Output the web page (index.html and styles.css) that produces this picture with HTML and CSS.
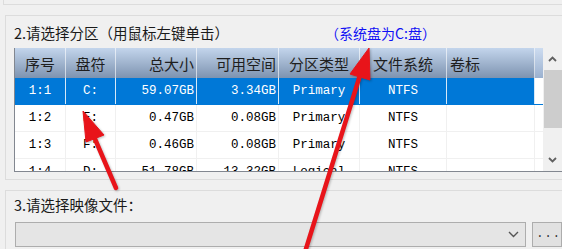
FILE: index.html
```html
<!DOCTYPE html>
<html lang="zh-CN">
<head>
<meta charset="utf-8">
<title>分区选择</title>
<link rel="stylesheet" href="styles.css">
</head>
<body>
<div class="window">
  <div class="prev-box"></div>

  <section class="group group-part">
    <div class="group-head">
      <span class="label">2.请选择分区（用鼠标左键单击）</span>
      <span class="note">（系统盘为C:盘）</span>
    </div>
    <div class="list">
      <div class="list-main">
        <div class="row head">
          <div class="c center">序号</div>
          <div class="c center">盘符</div>
          <div class="c right">总大小</div>
          <div class="c right">可用空间</div>
          <div class="c center">分区类型</div>
          <div class="c center">文件系统</div>
          <div class="c left">卷标</div>
          <div class="fill"></div>
        </div>
        <div class="row body sel">
          <div class="c center">1:1</div>
          <div class="c center">C:</div>
          <div class="c right">59.07GB</div>
          <div class="c right">3.34GB</div>
          <div class="c center">Primary</div>
          <div class="c center">NTFS</div>
          <div class="c left"></div>
          <div class="fill"></div>
        </div>
        <div class="row body">
          <div class="c center">1:2</div>
          <div class="c center">E:</div>
          <div class="c right">0.47GB</div>
          <div class="c right">0.08GB</div>
          <div class="c center">Primary</div>
          <div class="c center">NTFS</div>
          <div class="c left"></div>
          <div class="fill"></div>
        </div>
        <div class="row body">
          <div class="c center">1:3</div>
          <div class="c center">F:</div>
          <div class="c right">0.46GB</div>
          <div class="c right">0.08GB</div>
          <div class="c center">Primary</div>
          <div class="c center">NTFS</div>
          <div class="c left"></div>
          <div class="fill"></div>
        </div>
        <div class="row body">
          <div class="c center">1:4</div>
          <div class="c center">D:</div>
          <div class="c right">51.78GB</div>
          <div class="c right">13.32GB</div>
          <div class="c center">Logical</div>
          <div class="c center">NTFS</div>
          <div class="c left"></div>
          <div class="fill"></div>
        </div>
      </div>
      <div class="vscroll">
        <div class="sbtn">
          <svg width="9" height="6" viewBox="0 0 9 6"><path d="M1 5 L4.5 1.5 L8 5" fill="none" stroke="#606060" stroke-width="1.8"/></svg>
        </div>
        <div class="thumb"></div>
        <div class="track"></div>
        <div class="sbtn">
          <svg width="9" height="6" viewBox="0 0 9 6"><path d="M1 1 L4.5 4.5 L8 1" fill="none" stroke="#606060" stroke-width="1.8"/></svg>
        </div>
      </div>
    </div>
  </section>

  <section class="group group-image">
    <div class="label">3.请选择映像文件：</div>
    <div class="picker">
      <div class="combo">
        <svg width="11" height="7" viewBox="0 0 11 7"><path d="M1 1 L5.5 5.5 L10 1" fill="none" stroke="#555" stroke-width="1.4"/></svg>
      </div>
      <div class="browse">...</div>
    </div>
  </section>

  <svg class="arrows" width="562" height="249" viewBox="0 0 562 249">
    <g fill="#e8141a" stroke="#e8141a">
      <line x1="116" y1="188" x2="92" y2="132" stroke-width="4.5" stroke-linecap="round"/>
      <polygon points="83,111 104,135 86,142" stroke-width="1" stroke-linejoin="round"/>
      <line x1="300" y1="268" x2="361" y2="72" stroke-width="4.5" stroke-linecap="round"/>
      <polygon points="369,48 370,80 350,74" stroke-width="1" stroke-linejoin="round"/>
    </g>
  </svg>
</div>
</body>
</html>
```

FILE: styles.css
```css
html, body {
  margin: 0;
  padding: 0;
  background: #f0f0f0;
  width: 562px;
  height: 249px;
  overflow: hidden;
}

.window {
  position: relative;
  width: 562px;
  height: 249px;
  overflow: hidden;
  font-family: "Noto Sans CJK SC", "Noto Sans", sans-serif;
  color: #1a1a1a;
}

.prev-box {
  height: 4px;
  margin-left: 3px;
  border-left: 1px solid #dcdcdc;
  border-bottom: 1px solid #dcdcdc;
}

.group {
  margin-left: 5px;
  border: 1px solid #dcdcdc;
  border-right: none;
  padding-left: 8px;
}

.group-part {
  margin-top: 10px;
  padding-bottom: 7px;
}

.group-head {
  display: flex;
  align-items: center;
  height: 20px;
  margin-top: 7px;
  margin-bottom: 5px;
}

.label {
  font-size: 14.5px;
  line-height: 20px;
  white-space: nowrap;
}

.note {
  margin-left: 96px;
  font-size: 14px;
  line-height: 20px;
  color: #1010f5;
  white-space: nowrap;
}

/* list view */
.list {
  display: flex;
  height: 123px;
  border-left: 1px solid #828790;
  border-bottom: 1px solid #828790;
  margin-right: -40px;
}

.list-main {
  width: 528px;
  flex: none;
  overflow: hidden;
  background: #fff;
}

.row {
  display: grid;
  grid-template-columns: 51px 50px 81px 82px 81px 87px 88px 8px;
}

.row.head {
  height: 30px;
  background: linear-gradient(#c3d5ec, #7d93b0);
  font-size: 15px;
  color: #1e1e1e;
}

.row.head .c {
  border-right: 1px solid rgba(255, 255, 255, 0.6);
}

.row.head .fill {
  background: linear-gradient(#cddcf0, #9bb1cf);
}

.row.body {
  height: 27px;
  box-sizing: border-box;
  border-bottom: 1px solid #f0f0f0;
  font-family: "Liberation Mono", monospace;
  font-size: 12.5px;
  color: #000;
}

.row.body .c {
  border-right: 1px solid #f0f0f0;
}

.row.sel {
  background: #0078d7;
  color: #fff;
  border-bottom-color: #0078d7;
}

.row.sel .c {
  border-right-color: #d6e8f7;
}

.row.sel .fill {
  background: #fff;
}

.c {
  display: flex;
  align-items: center;
  box-sizing: border-box;
  padding: 0 2px;
  white-space: nowrap;
  overflow: hidden;
}

.c.center { justify-content: center; }
.c.right { justify-content: flex-end; }
.c.left { justify-content: flex-start; padding-left: 3px; }

.vscroll {
  width: 19px;
  flex: none;
  display: flex;
  flex-direction: column;
  background: #f0f0f0;
}

.sbtn {
  height: 22px;
  flex: none;
  display: flex;
  align-items: center;
  justify-content: center;
}

.thumb {
  height: 58px;
  flex: none;
  margin-left: 1px;
  background: #cdcdcd;
}

.track { flex: 1; }

/* image file group */
.group-image {
  margin-top: 10px;
  height: 80px;
}

.group-image .label {
  margin-top: 4px;
}

.picker {
  display: flex;
  margin-top: 7px;
  margin-left: 1px;
}

.combo {
  width: 516px;
  height: 25px;
  box-sizing: border-box;
  border: 1px solid #adadad;
  background: #e5e5e5;
  display: flex;
  align-items: center;
  justify-content: flex-end;
  padding-right: 6px;
}

.browse {
  width: 30px;
  height: 25px;
  box-sizing: border-box;
  margin-left: 6px;
  border: 1px solid #adadad;
  background: #e1e1e1;
  font-family: "Liberation Mono", monospace;
  font-size: 12px;
  line-height: 22px;
  padding-left: 3px;
  color: #333;
  letter-spacing: 1px;
}

.arrows {
  position: absolute;
  left: 0;
  top: 0;
  pointer-events: none;
  filter: drop-shadow(1px 1px 1px rgba(0, 0, 0, 0.25));
}
```
